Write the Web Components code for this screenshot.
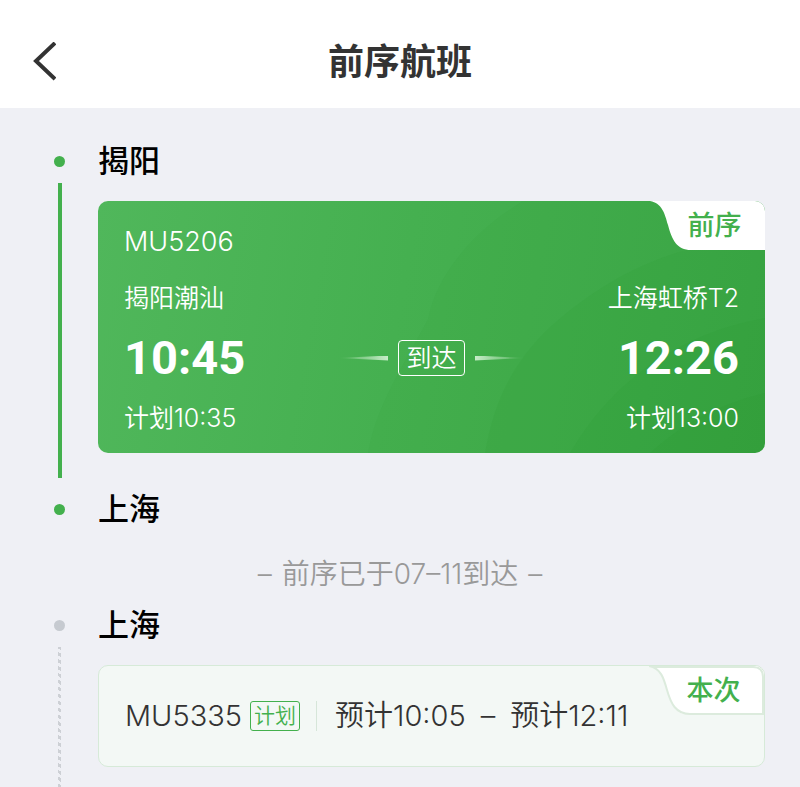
<!DOCTYPE html>
<html lang="zh-CN">
<head>
<meta charset="UTF-8">
<meta name="viewport" content="width=device-width, initial-scale=1">
<title>前序航班</title>
<style>
  :root {
    --green: #43b04d;
    --ink: #333;
    --page: #eff0f5;
  }
  body {
    margin: 0;
    min-height: 100vh;
    background: var(--page);
    color: var(--ink);
    font-family: Inter, "Noto Sans CJK SC", sans-serif;
  }
</style>
</head>
<body>
<flight-page></flight-page>

<script>
class PageHeader extends HTMLElement {
  connectedCallback() {
    this.attachShadow({ mode: 'open' });
    this.shadowRoot.innerHTML = `
      <style>
        :host { display: block; background: #fff; }
        * { box-sizing: border-box; margin: 0; padding: 0; }
        header {
          display: grid;
          grid-template-columns: 64px 1fr 64px;
          align-items: center;
          height: 108px;
          padding: 16px 12px 0;
        }
        button {
          display: flex;
          align-items: center;
          justify-content: center;
          height: 64px;
          border: 0;
          background: none;
          color: inherit;
          cursor: pointer;
        }
        h1 { font-size: 36px; line-height: 48px; font-weight: 700; text-align: center; }
      </style>
      <header>
        <button type="button" aria-label="返回">
          <svg width="24" height="40" viewBox="0 0 24 40" fill="none" stroke="currentColor" stroke-width="4">
            <path d="M23 1 4 19 23 37"/>
          </svg>
        </button>
        <h1><slot></slot></h1>
      </header>
    `;
  }
}

class CityStop extends HTMLElement {
  connectedCallback() {
    this.attachShadow({ mode: 'open' });
    this.shadowRoot.innerHTML = `
      <style>
        :host { display: grid; grid-template-columns: 98px 1fr; align-items: center; color: #000; }
        * { box-sizing: border-box; margin: 0; padding: 0; }
        .dot { width: 11px; height: 11px; margin: 2px 0 0 54px; border-radius: 50%; background: var(--green); }
        :host([pending]) .dot { background: #c6cad0; }
        h2 { font-size: 31px; line-height: 45px; font-weight: 500; }
      </style>
      <span class="dot"></span>
      <h2><slot></slot></h2>
    `;
  }
}

class FlightTrack extends HTMLElement {
  connectedCallback() {
    this.attachShadow({ mode: 'open' });
    this.shadowRoot.innerHTML = `
      <style>
        :host { display: grid; grid-template-columns: 98px 1fr; padding-right: 35px; }
        .line { width: 4px; margin-left: 58px; background: var(--green); }
        :host([pending]) .line {
          width: 3px;
          background: repeating-linear-gradient(30deg, #cdd0d5 0 3px, transparent 3px 6px);
        }
        .card { padding: 18px 0 25px; }
        :host([pending]) .card { padding-bottom: 20px; }
      </style>
      <span class="line"></span>
      <div class="card"><slot></slot></div>
    `;
  }
}

class CornerTag extends HTMLElement {
  connectedCallback() {
    this.attachShadow({ mode: 'open' });
    this.shadowRoot.innerHTML = `
      <style>
        /* sits over the top right corner of its card */
        :host {
          position: absolute;
          top: 0;
          right: 0;
          width: 115px;
          height: 50px;
          color: var(--green);
          font-size: 27px;
          line-height: 50px;
          font-weight: 500;
        }
        svg { position: absolute; inset: 0; }
        .fill { fill: #fff; }
        .edge { fill: none; stroke: var(--tag-line, none); stroke-width: 2px; }
        span { position: relative; display: block; padding-left: 14px; text-align: center; }
      </style>
      <svg width="115" height="50" viewBox="0 0 115 50">
        <path class="fill" d="M0 0C12 2 15 13 18 24C22 39 27 49 41 49H115V0Z"/>
        <path class="edge" d="M0 0C12 2 15 13 18 24C22 38 27 48 41 48H114V11Q114 1 104 1H4"/>
      </svg>
      <span><slot></slot></span>
    `;
  }
}

class StatusBadge extends HTMLElement {
  connectedCallback() {
    this.attachShadow({ mode: 'open' });
    this.shadowRoot.innerHTML = `
      <style>
        :host { display: inline-block; }
        span {
          display: block;
          border: 1px solid currentColor;
          border-radius: 4px;
          padding: 0 7px;
          font-size: 25px;
          line-height: 34px;
        }
        :host([small]) span { border-radius: 3px; padding: 0 3px; font-size: 21px; line-height: 28px; }
      </style>
      <span><slot></slot></span>
    `;
  }
}

class ArrivedCard extends HTMLElement {
  connectedCallback() {
    const a = name => this.getAttribute(name);
    this.attachShadow({ mode: 'open' });
    this.shadowRoot.innerHTML = `
      <style>
        :host {
          display: block;
          position: relative;
          overflow: hidden;
          border-radius: 10px;
          background: linear-gradient(100deg, #50b75b, #45b050 45%, #3ca746);
          color: #fff;
        }
        * { box-sizing: border-box; margin: 0; padding: 0; }
        .waves { position: absolute; inset: 0; width: 100%; height: 100%; fill: #16881f; fill-opacity: .07; }
        .body { position: relative; padding: 24px 26px 18px; font-weight: 350; }
        .number { font-size: 27px; line-height: 34px; font-weight: 350; }
        .route { display: grid; grid-template-columns: 1fr auto 1fr; align-items: center; margin-top: 22px; }
        .end { display: flex; flex-direction: column; gap: 15px; font-size: 25px; line-height: 34px; }
        .arrive { text-align: right; }
        time {
          font-family: Roboto, sans-serif;
          font-size: 47px;
          line-height: 56px;
          font-weight: 700;
        }
        .status { display: flex; align-items: center; gap: 10px; }
        .ray { width: 50px; height: 5px; }
        .ray { background: linear-gradient(90deg, transparent, #c8ecc9); clip-path: polygon(0 50%, 100% 0, 100% 100%); }
        .ray.out { background: linear-gradient(270deg, transparent, #c8ecc9); clip-path: polygon(0 0, 100% 50%, 0 100%); }
      </style>
      <svg class="waves" viewBox="0 0 667 252" preserveAspectRatio="xMaxYMid slice">
        <path fill-opacity=".04" d="M425 0C372 32 338 76 330 118C305 165 278 205 270 252H667V0Z"/>
        <path d="M667 36C560 42 495 88 452 126C412 164 395 205 387 252H667Z"/>
        <path d="M667 117C580 132 512 182 472 252H667Z"/>
        <path d="M667 192C620 203 584 223 552 252H667Z"/>
      </svg>
      <article class="body">
        <h3 class="number">${a('number')}</h3>
        <div class="route">
          <div class="end">
            <p>${a('from')}</p>
            <time>${a('departed')}</time>
            <p>计划${a('plan-out')}</p>
          </div>
          <div class="status">
            <span class="ray"></span>
            <status-badge>到达</status-badge>
            <span class="ray out"></span>
          </div>
          <div class="end arrive">
            <p>${a('to')}</p>
            <time>${a('arrived')}</time>
            <p>计划${a('plan-in')}</p>
          </div>
        </div>
      </article>
      <corner-tag><slot></slot></corner-tag>
    `;
  }
}

class PlannedCard extends HTMLElement {
  connectedCallback() {
    const a = name => this.getAttribute(name);
    this.attachShadow({ mode: 'open' });
    this.shadowRoot.innerHTML = `
      <style>
        :host {
          --tag-line: #dcebdd;
          display: block;
          position: relative;
          overflow: hidden;
          border: 1px solid #d6ead8;
          border-radius: 10px;
          background: #f3f8f5;
        }
        * { box-sizing: border-box; margin: 0; padding: 0; }
        .row { display: flex; align-items: center; padding: 30px 26px; font-weight: 350; }
        .number { font-size: 29px; line-height: 40px; font-weight: 350; }
        status-badge { margin-left: 8px; color: var(--green); }
        .rule { width: 1px; height: 30px; margin: 0 18px 0 16px; background: #d6e6d9; }
        .times { display: flex; gap: 15px; font-size: 29px; line-height: 40px; }
      </style>
      <article class="row">
        <h3 class="number">${a('number')}</h3>
        <status-badge small>计划</status-badge>
        <span class="rule"></span>
        <p class="times"><span>预计${a('out')}</span><span>–</span><span>预计${a('in')}</span></p>
      </article>
      <corner-tag><slot></slot></corner-tag>
    `;
  }
}

class FlightPage extends HTMLElement {
  connectedCallback() {
    this.attachShadow({ mode: 'open' });
    this.shadowRoot.innerHTML = `
      <style>
        :host { display: block; }
        main { padding-top: 30px; }
        .next { margin-top: 8px; }
        .note {
          display: flex;
          justify-content: center;
          gap: 10px;
          margin: 23px 0 0;
          color: #999;
          font-size: 28px;
          line-height: 40px;
          font-weight: 350;
        }
      </style>
      <page-header>前序航班</page-header>
      <main>
        <city-stop>揭阳</city-stop>
        <flight-track>
          <arrived-card number="MU5206" from="揭阳潮汕" to="上海虹桥T2"
            departed="10:45" arrived="12:26" plan-out="10:35" plan-in="13:00">前序</arrived-card>
        </flight-track>
        <city-stop class="next">上海</city-stop>
        <p class="note"><span>–</span><span>前序已于07–11到达</span><span>–</span></p>
        <city-stop class="next" pending>上海</city-stop>
        <flight-track pending>
          <planned-card number="MU5335" out="10:05" in="12:11">本次</planned-card>
        </flight-track>
      </main>
    `;
  }
}

customElements.define('page-header', PageHeader);
customElements.define('city-stop', CityStop);
customElements.define('flight-track', FlightTrack);
customElements.define('corner-tag', CornerTag);
customElements.define('status-badge', StatusBadge);
customElements.define('arrived-card', ArrivedCard);
customElements.define('planned-card', PlannedCard);
customElements.define('flight-page', FlightPage);
</script>
</body>
</html>
